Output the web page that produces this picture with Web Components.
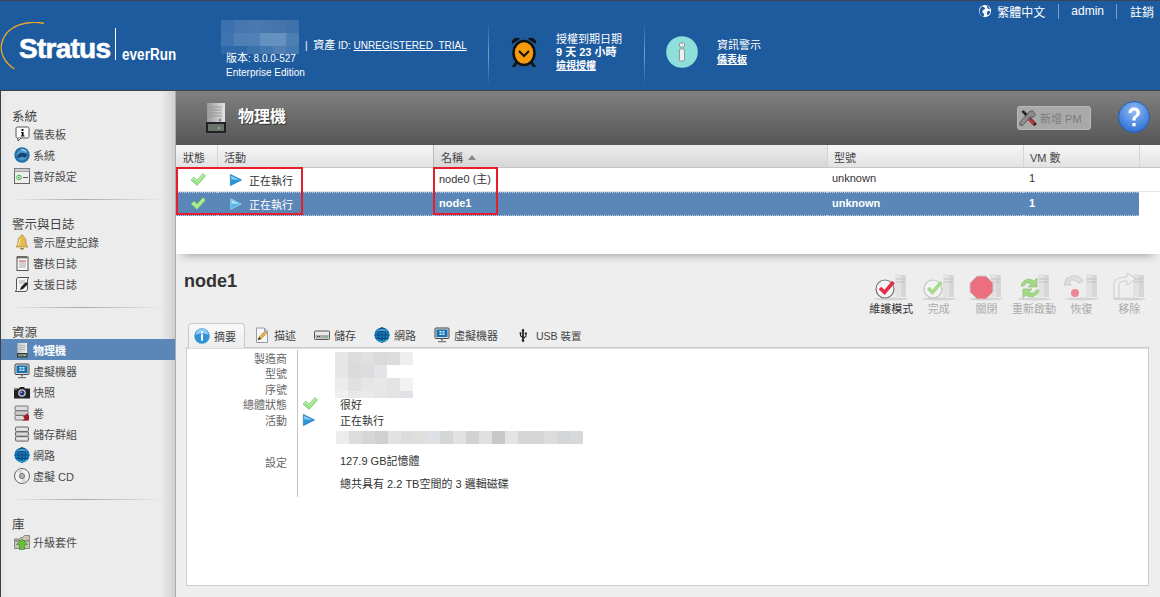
<!DOCTYPE html>
<html lang="zh-Hant"><head><meta charset="utf-8"><title>everRun</title>
<style>
html,body{margin:0;padding:0;width:1160px;height:597px;overflow:hidden;background:#eee;font:11px "Liberation Sans","Noto Sans CJK TC",sans-serif;color:#333}
</style></head><body>
<x-app>
  <x-header slot="header"></x-header>
  <x-sidebar slot="side">
    <x-nav-group title="系統">
      <x-nav-item icon="infobubble">儀表板</x-nav-item>
      <x-nav-item icon="sysglobe">系統</x-nav-item>
      <x-nav-item icon="prefs">喜好設定</x-nav-item>
    </x-nav-group>
    <x-nav-group title="警示與日誌">
      <x-nav-item icon="bell">警示歷史記錄</x-nav-item>
      <x-nav-item icon="notepad">審核日誌</x-nav-item>
      <x-nav-item icon="script">支援日誌</x-nav-item>
    </x-nav-group>
    <x-nav-group title="資源">
      <x-nav-item icon="server" active>物理機</x-nav-item>
      <x-nav-item icon="monitor">虛擬機器</x-nav-item>
      <x-nav-item icon="camera">快照</x-nav-item>
      <x-nav-item icon="volume">卷</x-nav-item>
      <x-nav-item icon="storage">儲存群組</x-nav-item>
      <x-nav-item icon="globe">網路</x-nav-item>
      <x-nav-item icon="cd">虛擬 CD</x-nav-item>
    </x-nav-group>
    <x-nav-group title="庫" last>
      <x-nav-item icon="upgrade">升級套件</x-nav-item>
    </x-nav-group>
  </x-sidebar>
  <x-main slot="main">
    <x-titlebar></x-titlebar>
    <x-grid></x-grid>
    <x-detail></x-detail>
  </x-main>
</x-app>
<script>
const ICONS={
infobubble:`<rect x="2" y="1" width="13" height="11" rx="1.5" fill="#fff" stroke="#555"/><path d="M4 12v3l3-3" fill="#fff" stroke="#555"/><rect x="7.5" y="3" width="2" height="2" fill="#111"/><path d="M7 6h2.6v3.6h1v1H6.8v-1h1V7H7z" fill="#111"/>`,
sysglobe:`<circle cx="8" cy="8" r="7.7" fill="#1d6fa8"/><circle cx="8" cy="8" r="5.5" fill="#4d96c8"/><path d="M3 9c2-3 5-4 7-3s3 0 3 2-2 3-4 2-3 1-5 1z" fill="#16466f"/><path d="M6 2.5c3-1 6 0 7.5 3-2-1.500-5-2-7.500-3z" fill="#cde6f6"/>`,
prefs:`<rect x=".5" y=".5" width="15" height="15" fill="#eee" stroke="#666"/><rect x=".5" y=".5" width="15" height="3" fill="#ccc" stroke="#666" stroke-width=".5"/><circle cx="5" cy="9.500" r="2.300" fill="#fff" stroke="#4a4"/><circle cx="5" cy="9.500" r="1" fill="#4a4"/><path d="M9 9.500h5" stroke="#555"/>`,
bell:`<path d="M8 1c-1 0-1.500.7-1.500 1.500C4.500 3.500 4 5.500 4 8c0 2.500-1 3.500-2 5h12c-1-1.500-2-2.500-2-5 0-2.500-.5-4.500-2.500-5.500C9.500 1.700 9 1 8 1z" fill="#e3bc55" stroke="#a37d1f" stroke-width=".6"/><path d="M6 14c0 1 1 1.700 2 1.700s2-.7 2-1.700z" fill="#a37d1f"/><path d="M6 5c-.6 2-.6 4-1.500 6.500" stroke="#fbeeb6" fill="none"/>`,
notepad:`<rect x="3" y="2" width="11" height="13.500" fill="#f7f7f7" stroke="#555"/><path d="M4 1v2.500M6 1v2.500M8 1v2.500M10 1v2.500M12 1v2.500" stroke="#333"/><path d="M5 6h7" stroke="#c44"/><path d="M5 8h7M5 10h7M5 12h7" stroke="#aaa"/>`,
script:`<path d="M4 1.500h11c-1.500 1-1.500 2-1.500 3.500v8c0 1.500-1 2.500-2.500 2.500H1c1-.5 1.500-1.500 1.500-2.500V3c0-1 .8-1.500 1.500-1.500z" fill="#f4f4f4" stroke="#555"/><path d="M5 5h6M5 7h6" stroke="#aaa"/><path d="M6 14l1-3 5-5 2 2-5 5z" fill="#222"/>`,
server:`<rect x="3.500" y="1" width="9.500" height="14" fill="url(#sg)"/><rect x="3" y="11" width="10.500" height="4.500" fill="#333"/><rect x="4" y="12" width="8.500" height="2.500" fill="#7d8a8a"/><rect x="10" y="13" width="1.500" height="1" fill="#5e5"/><path d="M5 3.500h6.500M5 5.500h6.500M5 7.500h6.500" stroke="#999" stroke-width=".6"/><defs><linearGradient id="sg" x2="1" y2="0"><stop offset="0" stop-color="#c2c8c8"/><stop offset="1" stop-color="#eee"/></linearGradient></defs>`,
monitor:`<rect x="1" y="1" width="14" height="10.500" rx="1" fill="#ddd" stroke="#444"/><rect x="2.500" y="2.500" width="11" height="7.500" fill="#1471b0"/><path d="M5.500 4h2v1.600h-2zM8.500 4h2v1.600h-2zM5.500 6.500h2v1.600h-2zM8.500 6.500h2v1.600h-2z" fill="#e8f6ff"/><path d="M7 11.500h2v2H7zM4 14h8v1.200H4z" fill="#777"/>`,
camera:`<path d="M0 4.500h5l1-1.500h4l1 1.500h5v10H0z" fill="#222"/><rect x="0" y="4.500" width="3" height="1.500" fill="#777"/><circle cx="8" cy="9" r="3.800" fill="#cfd3dc"/><circle cx="8" cy="9" r="2.500" fill="#23307a"/><circle cx="7.300" cy="8.300" r=".8" fill="#dde"/>`,
volume:`<rect x="1" y="1" width="13" height="4.500" rx=".8" fill="#ddd" stroke="#777"/><rect x="1" y="5.800" width="13" height="4.500" rx=".8" fill="#ccc" stroke="#777"/><rect x="1" y="10.500" width="13" height="4.500" rx=".8" fill="#ddd" stroke="#777"/><path d="M7 9l2.500 2.500L13 8.500l2 2v5H8.500l2-2z" fill="#a71d2a"/>`,
storage:`<rect x="1.500" y="1" width="13" height="4.500" rx="1" fill="#d8d8d8" stroke="#666"/><rect x="1.500" y="5.800" width="13" height="4.500" rx="1" fill="#c8c8c8" stroke="#666"/><rect x="1.500" y="10.600" width="13" height="4.500" rx="1" fill="#d8d8d8" stroke="#666"/><path d="M3.500 3h9M3.500 8h9M3.500 12.800h9" stroke="#fff" stroke-width=".7"/>`,
globe:`<circle cx="8" cy="8" r="7.600" fill="#1275b5"/><path d="M8 .5v15M.5 8h15M1.500 4.500h13M1.500 11.500h13" stroke="#0b3f6b" stroke-width=".7"/><ellipse cx="8" cy="8" rx="3.500" ry="7.500" fill="none" stroke="#0b3f6b" stroke-width=".7"/><path d="M2 5c2-3 9-5 12 0-4-1.500-8-1.500-12 0z" fill="#7fc4ee" opacity=".6"/><path d="M3 12.500c3 2.500 7 2.500 10 0" stroke="#35b4e0" fill="none"/>`,
cd:`<circle cx="8" cy="8" r="7.500" fill="#f1f1f1" stroke="#666"/><path d="M8 8L3 2.800A7 7 0 0 1 8 1zM8 8l5 5.200A7 7 0 0 1 8 15z" fill="#d8d8c8"/><circle cx="8" cy="8" r="2.600" fill="#bbb" stroke="#777"/><circle cx="8" cy="8" r="1" fill="#fff" stroke="#666" stroke-width=".5"/>`,
upgrade:`<path d="M.5 5h5l1-1.500h2L10.500 1.500h5V14.500H.5z" fill="#c8c4b4" stroke="#666" stroke-width=".7"/><path d="M.5 6h15v1.500H.5z" fill="#8a8678"/><path d="M8 5l5.500 5.500H10.500V15.500h-5v-5H2.500z" fill="#66c23a" stroke="#3a7d1f" stroke-width=".6"/>`,
check:`<path d="M1 8l3-3 3 3 6-6.500 2.500 2.500L7 13.500z" fill="#9ee288" stroke="#72b868" stroke-width=".6"/><path d="M2.500 8l1.500-1.500 3 3 6-6.300 1 1" fill="none" stroke="#d6f7c9" stroke-width=".8"/>`,
checkw:`<path d="M1 8l3-3 3 3 6-6.500 2.500 2.500L7 13.500z" fill="#a8ec90" stroke="#6fbb6a" stroke-width=".6"/>`,
play:`<path d="M1.500 1.500L14.500 8 1.500 14.500z" fill="#2b96d6" stroke="#1a6ea6" stroke-width=".6"/><path d="M2.500 3l9 5-9-1z" fill="#8dd0f2"/>`,
playw:`<path d="M2 2L14 8 2 14z" fill="#52b9ec" stroke="#d3eefb" stroke-width=".6"/><path d="M3 3.500l8 4.500-8-.8z" fill="#bce7fa"/>`,
infotab:`<circle cx="8" cy="8" r="7.700" fill="#2f93d6"/><path d="M1.500 7a6.500 6.500 0 0 1 13 0c-3-2-10-2-13 0z" fill="#8ecaf0"/><rect x="7" y="3.300" width="2" height="2" fill="#fff"/><rect x="7" y="6.300" width="2" height="6.300" fill="#fff"/>`,
docpen:`<path d="M2.500 1h8l3 3v11.500h-11z" fill="#f4f7fa" stroke="#99a"/><path d="M10.500 1v3h3" fill="#ddd" stroke="#99a"/><path d="M4 13l1-3 6-6 2 2-6 6z" fill="#e2b34a" stroke="#a3761d" stroke-width=".5"/><path d="M4 13l1-3 2 2z" fill="#333"/>`,
disk:`<rect x=".5" y="4" width="15" height="8.500" rx=".8" fill="#e9e9e9" stroke="#555"/><rect x="1.500" y="8" width="13" height="3.500" fill="#aaa"/><path d="M3 9.500h1M5 9.500h1" stroke="#333"/><rect x="11.500" y="9" width="2" height="1.500" fill="#5c5"/>`,
usb:`<path d="M8 .5l2 2.500H9v7.500l1.800-1.300V7H10V5h2.500v2H12v2.800l-3 2.400v1a1.500 1.500 0 1 1-2 0V11L4.500 9V6.900a1.200 1.200 0 1 1 1.200 0V8.400L7 9.400V3H6z" fill="#222"/>`,
hammer:`<path d="M2 2l2-1 11 11.500-2 2z" fill="#222"/><path d="M9 7l4.500 4.500-2 2L7 9z" fill="#b23a3a"/><path d="M11.500 1.500c-2 0-3 .5-4 2L1 11l-.5 2.500L3 14l7-7.500 2 .5 2-2z" fill="#8a8a8a" stroke="#333" stroke-width=".5" opacity=".95"/>`,
worldw:`<circle cx="8" cy="8" r="7" fill="#fff"/><path d="M5 2.500c1 1 3 1 3 2.500S5.500 6.500 5 8 6.500 10.500 7 12s-1 2-1.500 2.500C2 13 .8 9 2.500 5.500 3 4 4 3 5 2.500zM10 2c2 .7 3.500 2.500 3.500 4-1.500 0-2.500-.5-3-2zM11 8h3c0 2-1 4-3 5-1-1-1-3 0-5z" fill="#1e5b9e"/>`
};
function def(name,css,html,init){
  customElements.define(name,class extends HTMLElement{
    connectedCallback(){
      if(this.shadowRoot)return;
      const r=this.attachShadow({mode:'open'});
      r.innerHTML=`<style>${css}</style>`+(typeof html==='function'?html(this):html);
      if(init)init(this,r);
    }
  });
}
def('x-icon',':host{display:inline-flex;flex:none}svg{display:block;overflow:visible}',
  h=>{const s=h.getAttribute('size')||16;return `<svg width="${s}" height="${s}" viewBox="0 0 16 16" aria-hidden="true">${ICONS[h.getAttribute('name')]||''}</svg>`});
def('x-mosaic',':host{display:grid;grid-auto-rows:var(--h,13px)}i{display:block}',
  h=>{const rows=h.getAttribute('cells').split('|');const w=+h.getAttribute('w')||13;const n=Math.max(...rows.map(r=>r.split(' ').length));
  return `<style>:host{grid-template-columns:repeat(${n},${w}px)}</style>`+rows.map(r=>r.split(' ').map(c=>`<i style="background:${c}"></i>`).join('')).join('')});

def('x-app',`:host{display:grid;grid-template-columns:176px 984px;grid-template-rows:91px 506px;width:1160px;height:597px}
 ::slotted([slot=header]){grid-column:1/3}`,
 `<slot name="header"></slot><slot name="side"></slot><slot name="main"></slot>`);

def('x-header',`:host{display:flex;position:relative;box-sizing:border-box;height:91px;background:#1e5b9e;border-top:1px solid #3a4656;border-bottom:1px solid #38434f;color:#fff;font-size:11px}
 .logo{width:221px;flex:none;position:relative}
 .arc{position:absolute;left:0;top:21px}
 .brand{position:absolute;left:19px;top:32px;display:flex;align-items:flex-start}
 .st{font:bold 28px/32px "Liberation Sans",sans-serif;letter-spacing:-.75px;-webkit-text-stroke:.6px #fff}
 .ev{font:bold 16px/20px "Liberation Sans Narrow","Liberation Sans",sans-serif;border-left:1px solid #fff;margin-left:5px;padding-left:6px;height:32px;display:flex;align-items:flex-end;margin-top:-5px;letter-spacing:.1px}
 .ev span{display:block;margin-bottom:-5px;transform:scaleX(.84);transform-origin:left}
 .prod{width:267px;flex:none;padding-top:19px;box-sizing:border-box;position:relative;font-size:10px}
 .prod em{font-style:normal;font-size:11px}
 .asset{position:absolute;left:84px;top:37px;white-space:nowrap;line-height:14px}
 .ver{padding-left:5px;line-height:14px;margin-top:-3px}
 .div{width:1px;flex:none;margin-top:21px;height:64px;background:linear-gradient(#1e5b9e,#7aa0c8 50%,#1e5b9e)}
 .exp{width:155px;flex:none;display:flex;padding:14px 0 0 20px;box-sizing:border-box;align-items:center;height:88px}
 .txt{line-height:13px;margin-left:17px}
 .txt b{display:block}
 a{color:#fff;text-decoration:underline}
 .inf{display:flex;padding:14px 0 0 21px;box-sizing:border-box;align-items:center;height:88px}
 .inf .txt{margin-left:19px;line-height:14px}
 .top{position:absolute;right:6px;top:2px;display:flex;align-items:center;height:16px;font-size:12px}
 .top span{display:flex;align-items:center}
 .sep{width:1px;height:15px;background:#7aa0c8;margin:0 12px 0 13px}
 .sep+span+.sep{margin:0 13px 0 12px}`,
 `<div class="logo">
    <svg class="arc" width="50" height="50" viewBox="0 0 50 50"><path d="M44 1.500C30-2 6 2 1.500 22c-1.500 8 2 18 13 25" fill="none" stroke="#e9a52d" stroke-width="1.300"/></svg>
    <div class="brand"><span class="st">Stratus</span><span class="ev"><span>everRun</span></span></div>
  </div>
  <div class="prod">
    <x-mosaic w="13" style="--h:13px" cells="#3a71ae #4676ae #4a79b0 #4677ae #4474ab #3f72ab|#3e74b0 #4f80b5 #5080b5 #6290bf #6491c0 #4d7fb5"></x-mosaic>
    <x-mosaic w="13" style="--h:8px" cells="#2e68a8 #2e68a8 #3a70ab #4377ae #4f7fb3 #457ab0"></x-mosaic>
    <div class="ver"><em>版本</em>: 8.0.0-527<br>Enterprise Edition</div>
    <div class="asset">|&nbsp; <em>資產</em> ID: <a>UNREGISTERED_TRIAL</a></div>
  </div>
  <div class="div"></div>
  <div class="exp"><svg width="30" height="34" viewBox="0 0 30 34"><path d="M3 9a5 5 0 0 1 8-5zM27 9a5 5 0 0 0-8-5z" fill="#111"/><path d="M6 27l-3 5h3l3-4zM24 27l3 5h-3l-3-4z" fill="#111"/><ellipse cx="15" cy="18" rx="10.500" ry="12" fill="#f59a0c" stroke="#111" stroke-width="2.500"/><path d="M10 16l5 5 5-5" fill="none" stroke="#111" stroke-width="2"/></svg>
    <div class="txt">授權到期日期<b>9 天 23 小時</b><a><b style="font-size:10px">檢視授權</b></a></div></div>
  <div class="div"></div>
  <div class="inf"><svg width="32" height="32" viewBox="0 0 32 32"><circle cx="16" cy="16" r="15.800" fill="#8edfd9"/><rect x="13.500" y="7" width="5" height="4" rx="1" fill="#eee" stroke="#777" stroke-width=".7"/><rect x="13.500" y="13" width="5" height="12" rx="1" fill="#eee" stroke="#777" stroke-width=".7"/></svg>
    <div class="txt">資訊警示<br><a style="font-size:10px;font-weight:bold">儀表板</a></div></div>
  <div class="top"><span><x-icon name="worldw" size="14"></x-icon><span style="margin-left:5px">繁體中文</span></span><i class="sep"></i><span>admin</span><i class="sep"></i><span>註銷</span></div>`);

def('x-sidebar',`:host{display:block;box-sizing:border-box;height:506px;padding-top:17px;border-left:1px solid #3f3f3f;border-right:1px solid #aaa;
 background:linear-gradient(90deg,#e6e6e6 0,#ececec 8px,#ececec 160px,#d0d0d0 174px);overflow:hidden;font-size:11px}`,`<slot></slot>`);
def('x-nav-group',`:host{display:block}
 h3{margin:0;font:12.500px/18px "Liberation Sans","Noto Sans CJK TC",sans-serif;color:#444;padding-left:11px;height:15px}
 hr{border:0;height:1px;margin:13px 10px 16px 10px;background:linear-gradient(90deg,#ececec,#a8a8a8 45%,#ececec)}`,
 h=>`<h3>${h.getAttribute('title')}</h3><slot></slot>`+(h.hasAttribute('last')?'':'<hr>'));
def('x-nav-item',`:host{display:flex;align-items:center;height:21px;padding-left:13px;color:#4a4a4a;white-space:nowrap}
 :host([active]){background:#5a87b8;color:#fff;font-weight:bold}
 span{margin-left:3px}`,
 h=>`<x-icon name="${h.getAttribute('icon')}" size="16"></x-icon><span><slot></slot></span>`);
def('x-main',`:host{display:flex;flex-direction:column;height:506px;overflow:hidden}`,`<slot></slot>`);
def('x-titlebar',`:host{display:flex;align-items:center;box-sizing:border-box;height:54px;flex:none;background:linear-gradient(#808080,#565656);padding:0 10px 0 29px;color:#fff}
 h1{margin:0 0 0 11px;font:bold 16px/20px "Liberation Sans","Noto Sans CJK TC",sans-serif;text-shadow:1px 1px 1px #333;flex:1;position:relative;top:-1px}
 button{all:unset;box-sizing:border-box;display:flex;align-items:center;width:74px;height:24px;background:#a9a9a9;border:1px solid #b9b9b9;border-radius:3px;color:#7c7c7c;font-size:11px;padding-left:1px;margin-right:27px;font-family:inherit}
 button span{margin-left:2px}
 .help{position:relative;top:-1px;display:block}`,
 `<svg width="22" height="32" viewBox="0 0 22 32"><defs><linearGradient id="s" x2="1" y2="0"><stop offset="0" stop-color="#999"/><stop offset="1" stop-color="#e4e4e4"/></linearGradient></defs><rect x="2" y="1" width="18" height="22" fill="url(#s)"/><path d="M5 5h12M5 8h12M5 11h12M5 14h12" stroke="#888" stroke-width=".7"/><circle cx="15" cy="18" r="1.500" fill="#888"/><rect x="1" y="20" width="20" height="11" fill="#222"/><rect x="3" y="22" width="16" height="7" fill="#6f6f6f"/><rect x="13" y="25" width="2" height="2" fill="#4d4"/></svg>
  <h1>物理機</h1>
  <button><x-icon name="hammer" size="19"></x-icon><span>新增 PM</span></button>
  <svg class="help" width="32" height="32" viewBox="0 0 32 32"><defs><radialGradient id="h" cx=".5" cy=".3" r=".8"><stop offset="0" stop-color="#8fbdf5"/><stop offset="1" stop-color="#1f63d0"/></radialGradient></defs><circle cx="16" cy="16" r="15.500" fill="url(#h)" stroke="#2a5fb0"/><path d="M10.500 12c0-3.500 2.500-5.500 5.700-5.500s5.800 2 5.800 5c0 4.500-4.500 4.300-4.500 8h-3.200c0-5 4.200-5 4.200-7.800 0-1.300-1-2.300-2.400-2.300s-2.400 1-2.500 2.600zM14.300 22h3.300v3.300h-3.300z" fill="#fff"/></svg>`);
def('x-grid',`:host{display:block;position:relative;z-index:2;flex:none;height:109px;background:#fff;box-shadow:0 7px 9px -6px rgba(0,0,0,.35)}
 .row{display:grid;grid-template-columns:41px 216px 394px 196px 116px 1fr;height:24px;align-items:center}
 .head{background:linear-gradient(#f6f6f6,#e2e2e2);border-bottom:1px solid #c6c6c6;color:#444;height:22px}
 .head>div{height:100%;display:flex;align-items:center;padding:1px 0 0 6px;border-left:1px solid #d4d4d4;box-sizing:border-box}
 .head>div:first-child{border-left:0;padding-left:7px}
 .head .sort{background:linear-gradient(#ededed,#d6d6d6);border-left-color:#bbb;padding-left:7px}
 .head .sort i{display:inline-block;width:0;height:0;border:4px solid transparent;border-bottom:5px solid #888;border-top:0;margin-left:5px;margin-top:1px}
 .b>div{padding-left:5px;display:flex;align-items:center;height:100%;box-sizing:border-box;color:#333}
 .b .c{padding-left:14px}
 .b .a{padding-left:12px}
 .b .n{padding-left:6px}
 .a span{margin-left:6px}
 .b .t{position:relative;top:-2px}
 .r1{border-bottom:1px solid #e4e4e4;box-sizing:border-box}
 .sel>div:not(:last-child){background:#5a87b8;color:#fff;font-weight:bold;border-top:1px dotted #b9cbe0;border-bottom:1px dotted #b9cbe0}
 .sel .a span{font-weight:normal}
 .sel .t{top:-1px}
 .box{position:absolute;top:22px;height:48px;box-sizing:border-box;border:2px solid #e61e2b;pointer-events:none}`,
 `<div class="row head"><div>狀態</div><div>活動</div><div class="sort">名稱<i></i></div><div>型號</div><div>VM 數</div><div></div></div>
  <div class="row b r1"><div class="c"><x-icon name="check"></x-icon></div><div class="a"><x-icon name="play" size="14"></x-icon><span>正在執行</span></div><div class="n"><span class="t">node0&nbsp;(主)</span></div><div><span class="t">unknown</span></div><div style="padding-left:6px"><span class="t">1</span></div><div></div></div>
  <div class="row b sel"><div class="c"><x-icon name="checkw"></x-icon></div><div class="a"><x-icon name="playw" size="14"></x-icon><span>正在執行</span></div><div class="n"><span class="t">node1</span></div><div><span class="t">unknown</span></div><div style="padding-left:6px"><span class="t">1</span></div><div></div></div>
  <div class="box" style="left:0;width:127px"></div><div class="box" style="left:257px;width:65px"></div>`);
def('x-action',`:host{display:flex;flex-direction:column;align-items:center;width:47.600px;color:#aaa;white-space:nowrap}
 :host([on]){color:#333}
 .i{position:relative;width:44px;height:28px}
 svg{display:block}
 span{line-height:14px}`,
 h=>{const k=h.getAttribute('kind');const g={
  maint:`<circle cx="15" cy="17" r="9" fill="#f4f4f4" stroke="#777" stroke-width="1.200"/><path d="M10 16l4.500 4.500 9-10.500" fill="none" stroke="#e22b44" stroke-width="3.500"/>`,
  done:`<circle cx="15" cy="17" r="9" fill="#f4f4f4" stroke="#bbb" stroke-width="1.200"/><path d="M10 16l4.500 4.500 9-10.500" fill="none" stroke="#9ad97f" stroke-width="3.500"/>`,
  stop:`<path d="M11 6h9l7 7v9l-7 7h-9l-7-7v-9z" transform="translate(1 -2)" fill="#ec6f7f" stroke="#c9c9c9" stroke-width="1"/>`,
  restart:`<path d="M7 13c1-6 8-9 13-5l3-3v9h-9l3-3c-3-2-6-1-7 2zM25 17c-1 6-8 9-13 5l-3 3v-9h9l-3 3c3 2 6 1 7-2z" transform="translate(1 1)" fill="#a5d886" stroke="#86bd6c" stroke-width=".6"/>`,
  restore:`<path d="M5 7c6-5 14-4 17 2l-5 2c-2-3-6-4-9-2l2 4H3z" fill="#ddd" stroke="#bbb" stroke-width=".7"/><circle cx="14" cy="21" r="4" fill="#ee7386"/>`,
  remove:`<path d="M6 25V11c0-5 6-7 13-7V0l9 6-9 6V8c-5 0-8 1-8 4v13z" transform="translate(0 1)" fill="#eee" stroke="#c8c8c8"/>`
 }[k];
 return `<div class="i"><svg width="44" height="28" viewBox="0 0 44 28" style="overflow:visible"><g><rect x="26" y="0" width="6" height="23" rx="1" fill="#e2e2e2"/><rect x="32" y="1" width="5" height="22" fill="#d6d6d6"/><path d="M27 5h9M27 8h9" stroke="#c4c4c4"/><ellipse cx="22" cy="25" rx="17" ry="1.500" fill="#d4d4d4"/></g><g transform="translate(1 -2)" ${h.hasAttribute('on')||k==='stop'||k==='restart'?'':'opacity=".85"'}>${g}</g></svg></div><span><slot></slot></span>`});
def('x-tab',`:host{display:flex;align-items:center;height:24px;white-space:nowrap;padding:0 10px 0 9px;color:#444;position:relative}
 :host([active]){box-sizing:border-box;background:linear-gradient(#fafafa,#ececec);border:1px solid #c8c8c8;border-bottom:0;border-radius:4px 4px 0 0;padding:0 8px 0 5px;margin-right:1px;height:25px;margin-bottom:-1px;z-index:1}
 span{margin-left:4px}`,
 h=>`<x-icon name="${h.getAttribute('icon')}" size="${h.getAttribute('size')||16}"></x-icon><span><slot></slot></span>`);
def('x-detail',`:host{display:block;flex:1;position:relative;padding:0 11px 0 8px;background:#eee}
 h2{margin:0;font:bold 18px/22px "Liberation Sans",sans-serif;color:#333;position:relative;top:16px;height:0}
 .acts{display:flex;justify-content:flex-end;padding-top:20px;height:49px;margin-right:-4px}
 .tabs{display:flex;padding-left:4px;align-items:flex-end}
 .tabs x-tab:nth-child(n+2){margin-left:-1px}
 .panel{box-sizing:border-box;margin-left:2px;height:239px;background:#fff;border:1px solid #ccc;box-shadow:inset 0 1px 0 #ddd;padding:2px 0 0 0}
 .g{display:grid;grid-template-columns:111px 37px 1fr;grid-template-rows:15.500px 15.500px 15.500px 15px 16px 18px 5px 18px 28px;color:#444;align-items:center;width:100%}
 .l{text-align:right;padding-right:10px;border-right:1px solid #c4c4c4;height:100%;box-sizing:border-box;display:flex;align-items:center;justify-content:flex-end;color:#666}
 .v{padding-left:5px;color:#333}
 .ic{padding-left:4px;display:flex}
 .m{grid-column:3;grid-row:1/span 4;align-self:start;margin-top:2px}
 .m3{grid-column:3;grid-row:1/span 4;align-self:start;margin-top:41px;--h:7px}
 .m2{grid-column:3;grid-row:6;align-self:start;margin:3.500px 0 0 1px}`,
 `<h2>node1</h2>
  <div class="acts">
   <x-action kind="maint" on>維護模式</x-action><x-action kind="done">完成</x-action><x-action kind="stop">關閉</x-action><x-action kind="restart">重新啟動</x-action><x-action kind="restore">恢復</x-action><x-action kind="remove">移除</x-action>
  </div>
  <div class="tabs">
   <x-tab icon="infotab" active>摘要</x-tab><x-tab icon="docpen">描述</x-tab><x-tab icon="disk">儲存</x-tab><x-tab icon="globe">網路</x-tab><x-tab icon="monitor">虛擬機器</x-tab><x-tab icon="usb" size="14"><i style="font-style:normal;margin-left:2px;font-size:10.500px">USB 裝置</i></x-tab>
  </div>
  <div class="panel"><div class="g">
    <div class="l" style="grid-row:1">製造商</div>
    <div class="l" style="grid-row:2">型號</div>
    <div class="l" style="grid-row:3">序號</div>
    <x-mosaic class="m" cells="#e6e6e6 #dcdcdc #e0e0e0 #dadada #dcdcdc #eeeeee|#e6e6e6 #dadada #dcdcdc #e4e4e8 #fff #fff|#ececec #e0e0e0 #e6e6e6 #e8e8e8 #e4e4e6 #f2f2f2"></x-mosaic>
    <x-mosaic class="m3" cells="#f0f0f0 #e8e8e8 #eaeaea #e6e6e6 #e4e4e6 #e2e2e6"></x-mosaic>
    <div class="l" style="grid-row:4">總體狀態</div><div class="ic" style="grid-row:4;grid-column:2"><x-icon name="check"></x-icon></div><div class="v" style="grid-row:4;grid-column:3">很好</div>
    <div class="l" style="grid-row:5">活動</div><div class="ic" style="grid-row:5;grid-column:2"><x-icon name="play" size="14"></x-icon></div><div class="v" style="grid-row:5;grid-column:3">正在執行</div>
    <div class="l" style="grid-row:6"></div>
    <x-mosaic class="m2" cells="#ececec #dcdcde #d6d6d6 #d0d0ce #e2e2e2 #dcdcdc #dededc #dde0e4 #d6d6d6 #e2e2e2 #d2d2d0 #e0e0e0 #c8c8c8 #e4e4e4 #d6d6d6 #d6d6d6 #dcdcdc #d2d6d8 #d8d8d8"></x-mosaic>
    <div class="l" style="grid-row:7"></div>
    <div class="l" style="grid-row:8;padding-top:4px">設定</div><div class="v" style="grid-row:8;grid-column:3">127.9 GB記憶體</div>
    <div class="l" style="grid-row:9"></div><div class="v" style="grid-row:9;grid-column:3">總共具有 2.2 TB空間的 3 邏輯磁碟</div>
  </div></div>`);
</script>
</body></html>
